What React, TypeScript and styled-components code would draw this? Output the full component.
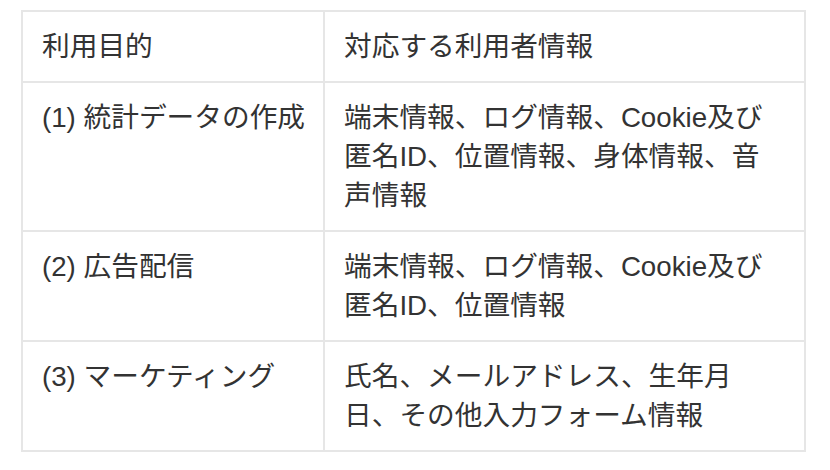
import React from 'react'
import styled, { createGlobalStyle } from 'styled-components'

const GlobalStyle = createGlobalStyle`
  html, body {
    margin: 0;
    padding: 0;
    background: #ffffff;
  }
`;

const rows = [
  {
    purpose: '(1) 統計データの作成',
    info: '端末情報、ログ情報、Cookie及び匿名ID、位置情報、身体情報、音声情報',
  },
  {
    purpose: '(2) 広告配信',
    info: '端末情報、ログ情報、Cookie及び匿名ID、位置情報',
  },
  {
    purpose: '(3) マーケティング',
    info: '氏名、メールアドレス、生年月日、その他入力フォーム情報',
  },
];

function App() {
  return (
    <Page>
      <GlobalStyle />
      <Table>
        <colgroup>
          <col style={{ width: 302 }} />
          <col />
        </colgroup>
        <thead>
          <tr>
            <Cell as="th">利用目的</Cell>
            <Cell as="th" $wide>対応する利用者情報</Cell>
          </tr>
        </thead>
        <tbody>
          {rows.map((r) => (
            <tr key={r.purpose}>
              <Cell>{r.purpose}</Cell>
              <Cell $wide>{r.info}</Cell>
            </tr>
          ))}
        </tbody>
      </Table>
    </Page>
  )
}

export default App

const Page = styled.div`
    padding: 10px 0 0 21px;
    font-family: "Liberation Sans", "Noto Sans CJK JP", sans-serif;
`;

const Table = styled.table`
    width: 785px;
    table-layout: fixed;
    border-collapse: collapse;
    border: 2px solid #e6e6e6;
`;

// right column wraps a little before its edge, as in the original
const Cell = styled.td<{ $wide?: boolean }>`
    border: 2px solid #e6e6e6;
    padding: 15px ${(p) => (p.$wide ? '37px' : '8px')} 15px 19px;
    font-size: 27.7px;
    line-height: 39px;
    font-weight: 400;
    color: #333333;
    text-align: left;
    vertical-align: top;
`;
